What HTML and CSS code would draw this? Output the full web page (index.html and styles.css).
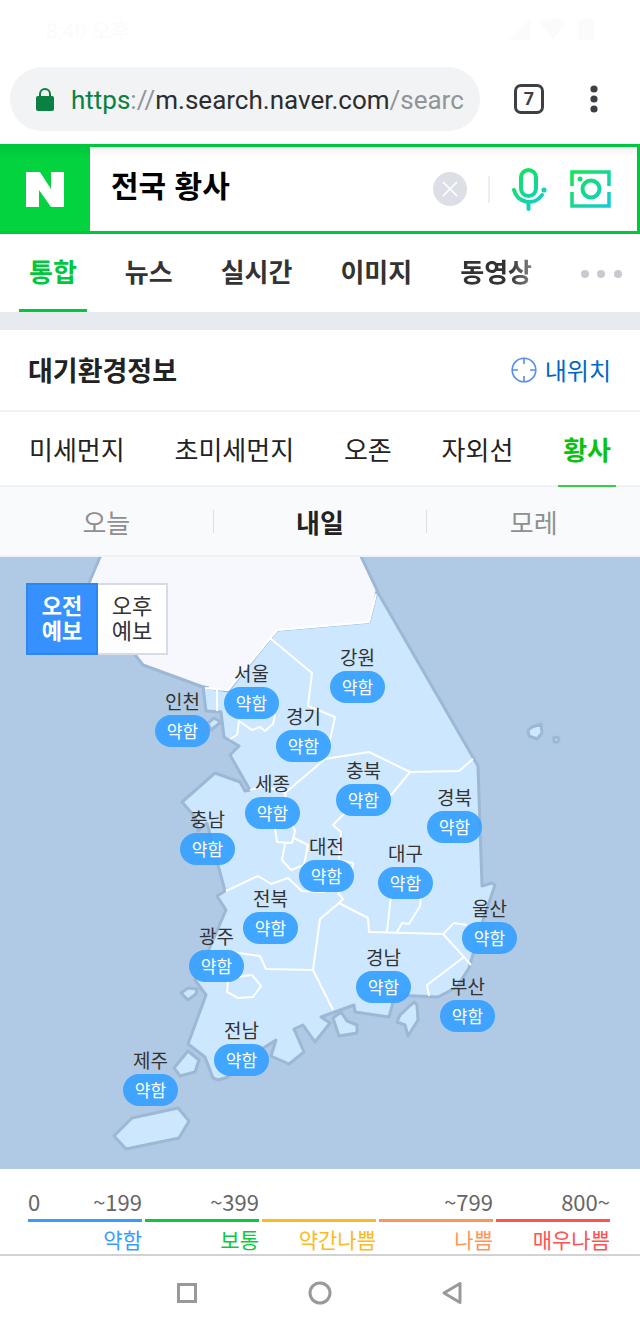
FILE: index.html
```html
<!DOCTYPE html>
<html lang="ko">
<head>
  <meta charset="UTF-8">
  <meta name="viewport" content="width=device-width, initial-scale=1">
  <title>전국 황사</title>
  <link rel="stylesheet" href="styles.css">
</head>
<body>

  <div class="status-bar">
    <span>8:40 오후</span>
    <svg width="86" height="24" viewBox="0 0 86 24" fill="currentColor">
      <path d="M0 23 L22 1 V23 Z"/>
      <path d="M32 6 Q45 -3 58 6 L45 22 Z"/>
      <path d="M70 3 h4 v-2 h8 v2 h4 v20 h-16 Z"/>
    </svg>
  </div>

  <div class="browser-bar">
    <button class="address" type="button">
      <svg class="lock" width="18" height="23" viewBox="0 0 18 23">
        <path d="M4 10 V6 a5 5 0 0 1 10 0 V10" fill="none" stroke="#0b8043" stroke-width="2"/>
        <rect y="8" width="18" height="15" rx="2" fill="#0b8043"/>
      </svg>
      <span class="url"><span class="secure">https</span><span class="dim">://</span>m.search.naver.com<span class="dim">/searc</span></span>
    </button>
    <button class="tab-count" type="button">7</button>
    <button class="icon-btn more" type="button" aria-label="메뉴">
      <svg width="8" height="28" viewBox="0 0 8 28" fill="#3c4043">
        <circle cx="4" cy="4" r="3.6"/><circle cx="4" cy="14" r="3.6"/><circle cx="4" cy="24" r="3.6"/>
      </svg>
    </button>
  </div>

  <form class="search">
    <a class="logo" href="#" aria-label="NAVER">
      <svg width="38" height="35" viewBox="0 0 38 35"><path d="M0 0 H14 L25 17 V0 H38 V35 H25 L13 18 V35 H0 Z" fill="#fff"/></svg>
    </a>
    <input class="query" type="text" value="전국 황사" aria-label="검색어">
    <button class="icon-btn" type="button" aria-label="지우기">
      <svg width="34" height="34" viewBox="0 0 34 34">
        <circle cx="17" cy="17" r="17" fill="#dce0e6"/>
        <path d="M10 10 L24 24 M24 10 L10 24" stroke="#fff" stroke-width="1.6"/>
      </svg>
    </button>
    <span class="search-line"></span>
    <button class="icon-btn" type="button" aria-label="음성검색">
      <svg width="36" height="44" viewBox="0 0 36 44" fill="none" stroke="url(#grad)" stroke-width="4" stroke-linecap="round">
        <defs>
          <linearGradient id="grad" gradientUnits="userSpaceOnUse" x1="2" y1="4" x2="38" y2="42">
            <stop offset="0" stop-color="#10e650"/>
            <stop offset="1" stop-color="#17c8e0"/>
          </linearGradient>
        </defs>
        <rect x="10" y="3" width="15" height="26" rx="7.5"/>
        <path d="M3 23 A15.5 15.5 0 0 0 31 28 M17.5 36 V42"/>
        <circle cx="33" cy="23" r="2.6" fill="url(#grad)" stroke="none"/>
      </svg>
    </button>
    <button class="icon-btn camera" type="button" aria-label="이미지검색">
      <svg width="42" height="40" viewBox="0 0 42 40" fill="none" stroke="url(#grad)" stroke-width="4">
        <path d="M2 17 V3 H39 V17 M2 23 V37 H39 V23" stroke-width="3.5"/>
        <circle cx="21" cy="20" r="8.5"/>
        <circle cx="10" cy="10" r="2.5" fill="url(#grad)" stroke="none"/>
      </svg>
    </button>
  </form>

  <nav class="main-tabs">
    <a class="on" href="#">통합</a>
    <a href="#">뉴스</a>
    <a href="#">실시간</a>
    <a href="#">이미지</a>
    <a class="fade" href="#">동영상</a>
    <button class="icon-btn tabs-more" type="button" aria-label="더보기">
      <svg width="42" height="8" viewBox="0 0 42 8" fill="#c9cacf">
        <circle cx="5" cy="4" r="4"/><circle cx="21" cy="4" r="4"/><circle cx="38" cy="4" r="4"/>
      </svg>
    </button>
  </nav>

  <main class="air">
    <header class="air-head">
      <h2>대기환경정보</h2>
      <a class="my-place" href="#">
        <svg width="26" height="26" viewBox="0 0 26 26" fill="none" stroke="#558eec" stroke-width="1.6">
          <circle cx="13" cy="13" r="11.8"/>
          <path d="M13 1 V7 M13 19 V25 M1 13 H7 M19 13 H25"/>
        </svg>
        내위치
      </a>
    </header>

    <nav class="air-tabs">
      <a href="#">미세먼지</a>
      <a href="#">초미세먼지</a>
      <a href="#">오존</a>
      <a href="#">자외선</a>
      <a class="on" href="#">황사</a>
    </nav>

    <nav class="day-tabs">
      <a href="#">오늘</a>
      <a class="on" href="#">내일</a>
      <a href="#">모레</a>
    </nav>

    <section class="map">
      <div class="map-canvas">
        <svg class="land" width="640" height="612" viewBox="0 557 640 612" stroke-linejoin="round">
          <!-- north -->
          <path class="north" d="M103 550 L89 583 L84 606 L98 632 L125 642 L143 665 L203 687 L228 692 L277 635 L369 624 L378 592 L358 550 Z"/>
          <!-- mainland -->
          <path class="south" d="M377 591 L369 622 L277 630 L228 691 L203 687 L206 711 L221 712 L224 737 L239 746 L230 755 L250 790 L245 791 L240 782 L215 773 L182 802 L195 817 L198 831 L207 823 L218 865 L225 891 L217 896 L226 910 L210 947 L195 980 L206 995 L188 1044 L205 1057 L213 1078 L218 1080 L228 1077 L260 1050 L276 1040 L271 1056 L289 1064 L304 1052 L294 1029 L303 1025 L315 1042 L330 1023 L321 1017 L354 1005 L355 1012 L389 1017 L395 995 L438 997 L457 987 L469 968 L483 920 L495 885 L492 883 L482 886 L478 766 Z"/>
          <!-- hides the coast line between north and south -->
          <path class="north-edge" d="M373 598 L367 620 L276 628 L227 688 L209 686"/>
          <!-- islands -->
          <g class="south">
            <path d="M208 723 L214 718 L221 722 L211 730 Z"/>
            <path d="M528 730 L532 727 L541 724 L542 733 L537 739 L529 736 Z"/>
            <path d="M554 737 L559 738 L558 742 L554 742 Z"/>
            <path d="M414 1002 L417 1005 L418 1020 L408 1036 L405 1025 L397 1022 L400 1015 Z"/>
            <path d="M341 1012 L347 1021 L357 1025 L357 1033 L339 1036 L333 1018 Z"/>
            <path d="M188 1051 L199 1060 L195 1072 L180 1076 L174 1068 Z"/>
            <path d="M181 993 L188 988 L197 989 L196 994 L188 1000 Z"/>
            <path d="M178 1108 L189 1121 L179 1138 L126 1149 L114 1136 L132 1118 Z"/>
          </g>
          <!-- province borders -->
          <g class="border">
            <path d="M376 594 L369 622 L277 630 L228 690 L205 688"/>
            <path d="M270 638 L312 673 L308 706 L335 717 L330 740 L325 759"/>
            <path d="M473 759 L459 771 L410 772 L369 752 L325 759 L285 793 L265 786 L250 790"/>
            <path d="M285 793 L288 815 L295 831 L292 843 L277 842 L275 828"/>
            <path d="M294 838 L308 845 L304 865 L291 870 L282 860 L285 844"/>
            <path d="M410 772 L392 794 L345 813 L333 825 L341 832 L339 860 L353 863 L350 885 L338 893 L343 899 L339 903 L320 919 L313 970 L333 1010"/>
            <path d="M226 891 L258 876 L271 884 L288 878 L302 891 L325 892"/>
            <path d="M225 951 L260 956 L266 969 L313 970"/>
            <path d="M243 976 L252 975 L261 986 L253 997 L238 998 L227 992 L228 980 Z"/>
            <path d="M339 903 L368 918 L369 932 L443 934 L464 957 L471 965"/>
            <path d="M443 934 L454 923 L467 925"/>
            <path d="M464 957 L427 985 L429 996"/>
            <path d="M391 895 L387 932 M421 895 L420 906 L409 924 L402 923 L397 932"/>
            <path d="M217 689 V711 M230 739 L237 735 L239 721 L252 730 L260 727 L265 731 L273 724 L275 715"/>
          </g>
        </svg>

        <div class="half-day">
          <button class="on" type="button">오전<br>예보</button>
          <button type="button">오후<br>예보</button>
        </div>

        <a class="pin seoul" href="#">서울<em>약함</em></a>
        <a class="pin gangwon" href="#">강원<em>약함</em></a>
        <a class="pin incheon" href="#">인천<em>약함</em></a>
        <a class="pin gyeonggi" href="#">경기<em>약함</em></a>
        <a class="pin sejong" href="#">세종<em>약함</em></a>
        <a class="pin chungbuk" href="#">충북<em>약함</em></a>
        <a class="pin gyeongbuk" href="#">경북<em>약함</em></a>
        <a class="pin chungnam" href="#">충남<em>약함</em></a>
        <a class="pin daejeon" href="#">대전<em>약함</em></a>
        <a class="pin daegu" href="#">대구<em>약함</em></a>
        <a class="pin jeonbuk" href="#">전북<em>약함</em></a>
        <a class="pin ulsan" href="#">울산<em>약함</em></a>
        <a class="pin gwangju" href="#">광주<em>약함</em></a>
        <a class="pin gyeongnam" href="#">경남<em>약함</em></a>
        <a class="pin busan" href="#">부산<em>약함</em></a>
        <a class="pin jeonnam" href="#">전남<em>약함</em></a>
        <a class="pin jeju" href="#">제주<em>약함</em></a>
      </div>
    </section>

    <ul class="legend">
      <li class="weak"><p><span>0</span><span>~199</span></p><strong>약함</strong></li>
      <li class="normal"><p><span>~399</span></p><strong>보통</strong></li>
      <li class="little-bad"><p></p><strong>약간나쁨</strong></li>
      <li class="bad"><p><span>~799</span></p><strong>나쁨</strong></li>
      <li class="very-bad"><p><span>800~</span></p><strong>매우나쁨</strong></li>
    </ul>
  </main>

  <footer class="system-nav">
    <button class="icon-btn" type="button" aria-label="최근 앱">
      <svg width="24" height="24" viewBox="0 0 24 24"><rect x="3.5" y="3.5" width="17" height="17" fill="none" stroke="#999" stroke-width="3"/></svg>
    </button>
    <button class="icon-btn" type="button" aria-label="홈">
      <svg width="24" height="24" viewBox="0 0 24 24"><circle cx="12" cy="12" r="10" fill="none" stroke="#999" stroke-width="3"/></svg>
    </button>
    <button class="icon-btn" type="button" aria-label="뒤로">
      <svg width="24" height="24" viewBox="0 0 24 24"><path d="M19 2.5 V21.5 L3 12 Z" fill="none" stroke="#999" stroke-width="3" stroke-linejoin="round"/></svg>
    </button>
  </footer>

</body>
</html>
```

FILE: styles.css
```css
* {
  box-sizing: border-box;
}
body {
  margin: 0;
  background: #fff;
  color: #222;
  font-family: "Noto Sans CJK KR", sans-serif;
}
a {
  color: inherit;
  text-decoration: none;
}
button, input {
  font-family: inherit;
  border: 0;
  padding: 0;
  background: none;
}
svg {
  display: block;
}
.icon-btn {
  display: flex;
  flex-shrink: 0;
}

/* status + browser bar */
.status-bar {
  display: flex;
  justify-content: space-between;
  align-items: center;
  height: 66px;
  padding: 0 46px 8px;
  color: #fbfbfb;
  font-family: Roboto, "Noto Sans CJK KR", sans-serif;
  font-size: 21px;
}
.browser-bar {
  display: flex;
  align-items: center;
  height: 78px;
  padding: 0 42px 12px 10px;
}
.address {
  display: flex;
  align-items: center;
  gap: 17px;
  flex: 1;
  min-width: 0;
  height: 64px;
  padding: 0 15px 0 26px;
  border-radius: 32px;
  background: #f1f3f5;
}
.lock {
  flex-shrink: 0;
}
.url {
  overflow: hidden;
  padding-top: 2px;
  white-space: nowrap;
  color: #2b2d2f;
  font-family: Roboto, sans-serif;
  font-size: 26px;
  line-height: 36px;
}
.secure {
  color: #0b8043;
}
.dim {
  color: #929496;
}
.tab-count {
  width: 30px;
  height: 30px;
  margin: 0 46px 0 34px;
  border: 3px solid #3c4043;
  border-radius: 7px;
  color: #3c4043;
  font-family: Roboto, sans-serif;
  font-size: 18px;
  font-weight: bold;
  line-height: 24px;
}

/* search */
.search {
  display: flex;
  align-items: center;
  height: 90px;
  padding-right: 25px;
  border: 3px solid #00c73c;
  border-left: 0;
  background: linear-gradient(#f3f3f3, #fff 10px);
}
.logo {
  display: flex;
  align-items: center;
  justify-content: center;
  width: 90px;
  height: 84px;
  background: linear-gradient(#00c73c, #04d340 12px);
}
.query {
  flex: 1;
  min-width: 0;
  height: 84px;
  padding: 0 21px 10px;
  color: #000;
  font-size: 30px;
  font-weight: bold;
}
.search-line {
  width: 2px;
  height: 27px;
  margin: 0 21px;
  background: #eceef1;
}
.camera {
  margin-left: 23px;
}

.main-tabs {
  display: flex;
  align-items: center;
  gap: 28px;
  height: 78px;
  padding: 0 18px 0 19px;
  color: #333;
  font-size: 26px;
  font-weight: bold;
}
.main-tabs a {
  height: 78px;
  padding: 0 10px;
  line-height: 73px;
  white-space: nowrap;
}
.main-tabs .on {
  color: #00c73c;
  border-bottom: 3px solid #00c73c;
}
.main-tabs .fade {
  color: transparent;
  background: linear-gradient(to right, #333 65%, #aaa);
  -webkit-background-clip: text;
  background-clip: text;
}
.tabs-more {
  margin-left: auto;
  padding-top: 2px;
}

/* air info */
.air {
  border-top: 18px solid #e7ebef;
}
.air-head {
  display: flex;
  align-items: center;
  justify-content: space-between;
  height: 82px;
  padding: 0 29px 0 28px;
  border-bottom: 2px solid #eff1f4;
}
.air-head h2 {
  margin: 0;
  font-size: 27px;
  line-height: 40px;
}
.my-place {
  display: flex;
  align-items: center;
  gap: 8px;
  color: #0068c3;
  font-size: 24px;
  line-height: 36px;
}
.air-tabs {
  display: flex;
  justify-content: space-between;
  height: 75px;
  padding: 0 24px;
  border-bottom: 2px solid #eff1f4;
  font-size: 26px;
}
.air-tabs a {
  height: 75px;
  padding: 0 5px;
  line-height: 73px;
}
.air-tabs .on {
  color: #0ac20f;
  border-bottom: 2px solid #35ce45;
  font-weight: bold;
}
.day-tabs {
  display: flex;
  align-items: center;
  height: 70px;
  border-bottom: 2px solid #eff1f4;
  background: #f9fafc;
  color: #8f8f8f;
  font-size: 26px;
}
.day-tabs a {
  flex: 1;
  line-height: 23px;
  text-align: center;
}
.day-tabs a + a {
  border-left: 1px solid #dcdee0;
}
.day-tabs .on {
  color: #222;
  font-weight: bold;
}

/* map */
.map {
  overflow: hidden;
  background: #b0cae5;
}
.map-canvas {
  position: relative;
  width: 640px;
  height: 612px;
  margin: 0 auto;
}
.north {
  fill: #f7f8fd;
  stroke: #9cb8d5;
  stroke-width: 3;
}
.north-edge {
  fill: none;
  stroke: #f7f8fd;
  stroke-width: 6;
}
.south {
  fill: #cde7ff;
  stroke: #9cb8d5;
  stroke-width: 3;
}
.border {
  fill: none;
  stroke: #fff;
  stroke-width: 2;
}
.half-day {
  position: absolute;
  left: 26px;
  top: 26px;
  display: flex;
}
.half-day button {
  width: 70px;
  height: 72px;
  padding-bottom: 5px;
  border: 2px solid #d5dce6;
  border-left: 0;
  background: rgba(255, 255, 255, 0.95);
  color: #333;
  font-size: 22px;
  line-height: 25px;
}
.half-day .on {
  width: 72px;
  border: 2px solid #2e86ef;
  background: #3691ff;
  color: #fff;
  font-weight: bold;
}
.pin {
  position: absolute;
  width: 55px;
  color: #333;
  font-size: 19px;
  line-height: 28px;
  text-align: center;
}
.pin em {
  display: block;
  border-radius: 16px;
  background: rgba(56, 161, 255, 0.94);
  color: #fff;
  font-size: 17px;
  font-style: normal;
  line-height: 32px;
}
.seoul { left: 224px; top: 102px; }
.gangwon { left: 330px; top: 86px; }
.incheon { left: 155px; top: 130px; }
.gyeonggi { left: 276px; top: 145px; }
.sejong { left: 245px; top: 212px; }
.chungbuk { left: 336px; top: 199px; }
.gyeongbuk { left: 427px; top: 226px; }
.chungnam { left: 180px; top: 248px; }
.daejeon { left: 299px; top: 275px; }
.daegu { left: 378px; top: 282px; }
.jeonbuk { left: 243px; top: 327px; }
.ulsan { left: 462px; top: 337px; }
.gwangju { left: 189px; top: 365px; }
.gyeongnam { left: 356px; top: 386px; }
.busan { left: 440px; top: 415px; }
.jeonnam { left: 214px; top: 459px; }
.jeju { left: 123px; top: 489px; }

/* legend */
.legend {
  display: grid;
  grid-template-columns: repeat(5, 1fr);
  gap: 3px;
  margin: 0;
  padding: 18px 30px 0 28px;
  list-style: none;
  text-align: right;
}
.legend p {
  display: flex;
  justify-content: flex-end;
  height: 32px;
  margin: 0;
  color: #666;
  font-size: 22px;
  line-height: 28px;
}
.weak p {
  justify-content: space-between;
}
.legend strong {
  display: block;
  padding-top: 3px;
  border-top: 3px solid;
  font-size: 21px;
  font-weight: normal;
  line-height: 29px;
}
.weak { color: #359dff; }
.normal { color: #0cc740; }
.little-bad { color: #fdba20; }
.bad { color: #ff9655; }
.very-bad { color: #ff5252; }

.system-nav {
  display: flex;
  align-items: center;
  justify-content: center;
  gap: 109px;
  height: 77px;
  padding-bottom: 2px;
  border-top: 2px solid #d0d2d4;
}
```
